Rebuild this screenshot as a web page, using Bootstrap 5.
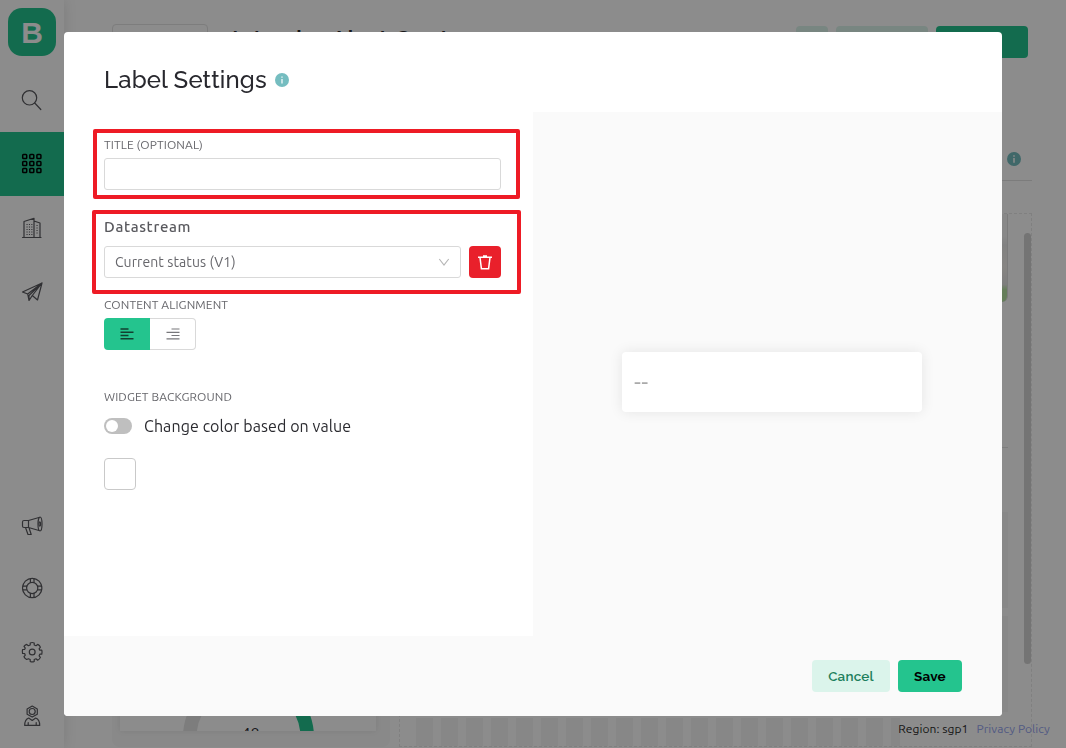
<!DOCTYPE html>
<html lang="en">
<head>
<meta charset="utf-8">
<title>Label Settings</title>
<meta name="viewport" content="width=device-width, initial-scale=1">
<link href="https://cdn.jsdelivr.net/npm/bootstrap@5.3.0/dist/css/bootstrap.min.css" rel="stylesheet">
<style>
:root{--green:#24c48e;--ui:Ubuntu,"Noto Sans",sans-serif;--head:Raleway,Lato,sans-serif}
html,body{height:100%}
body{font-family:var(--ui);color:#2b2b30;overflow:hidden;background:#fff}
svg{display:block}
.app{height:748px}
.side{width:64px;box-shadow:1px 0 12px rgba(0,0,0,.1)}
.side-item{height:64px}
.side-item svg{width:24px;height:24px;fill:none;stroke:#58585d;stroke-width:1.2;margin-left:-1px;stroke-linejoin:round;stroke-linecap:round}
.side-item.on{background:var(--green)}
.side-item.on svg{stroke:#000;stroke-width:1.5}
.logo{width:48px;height:48px;margin:8px 8px 12px;background:var(--green);border-radius:14px;color:#fff;font:700 30px/49px "Liberation Sans",sans-serif}
.topbar{height:181px;margin:0 34px 0 48px;border-bottom:1px solid #e2e2e2}
.tag{width:96px;height:24px;margin-top:24px;border:1px solid #e4e4e4;border-radius:4px}
.app-title{font:600 24px/30px var(--head);letter-spacing:.3px;margin:25px 0 0 24px}
.tb{height:32px;margin-top:26px;border-radius:4px;background:#dbf4eb}
.tb.main{background:var(--green)}
.info{background:#75bdc0;border-radius:50%;width:14px;height:14px}
.bd-info{right:45px;top:152px}
.canvas{left:399px;top:213px;width:633px;height:534px;border:1px dashed #eaeaea}
.ghost{right:23px;background:#f7f7f7;width:100px}
.scrollbar-thumb{left:1024px;top:233px;width:7px;height:431px;border-radius:4px;background:#d3d3d3}
.stripes{left:16px;bottom:0;width:484px;height:28px;background:repeating-linear-gradient(90deg,#f6f6f6 0 17px,#fff 17px 25px)}
.device{left:112px;top:400px;width:278px;height:347px;background:#f9f9f9;border-radius:8px}
.device-in{margin:0 14px 0 8px;height:331px;background:#fff;box-shadow:0 0 6px rgba(0,0,0,.08);overflow:hidden}
.region{right:16px;top:720px;font-size:12px;line-height:18px;gap:8px}
.region .r1{color:#2a2a2a;letter-spacing:.06px}
.region .r2{color:#95a4f0;letter-spacing:.08px}
.mask{background:rgba(0,0,0,.45);z-index:20}
.dlg{width:938px;height:684px;max-width:none;margin:32px 0 0 64px}
.dlg .modal-content{height:684px;border:0;border-radius:4px;overflow:hidden;background:#fff}
.dlg .modal-header{height:80px;border:0;padding:16px 40px 0;justify-content:flex-start;gap:8px}
.dlg h4{font:500 24px/32px var(--head);letter-spacing:.16px;color:#28282e;margin:0}
.dlg .modal-footer{height:80px;border:0;background:#fafafa;padding:24px 40px;gap:8px;border-radius:0}
.dlg .modal-footer .btn{margin:0;height:32px;padding:0;font:700 13.5px/31px var(--head);letter-spacing:.2px;border:0;border-radius:4px}
.dlg .modal-footer .cancel{width:78px;background:#dbf4eb;color:#1d7f5c;font-weight:600}
.dlg .modal-footer .save{width:64px;background:var(--green);color:#000}
.pane{width:469px}
.pv{background:#fafafa}
.pv-card{width:300px;height:60px;margin:0 0 -16px 9px;background:#fff;border-radius:4px;box-shadow:0 0 14px rgba(0,0,0,.09);padding-left:12px}
.pv-txt{font-size:24px;line-height:30px;color:#aaa;letter-spacing:.3px;margin-top:-1px}
.hl{border:4px solid #ee1b25;border-radius:2px}
.hl1{margin:17px 0 0 29px;width:427px;height:70px;padding:4px 15px 0 7px}
.hl2{margin:11px 0 0 28px;width:429px;height:84px;padding:4px 16px 0 8px}
.lbl{font-size:12px;line-height:16px;height:16px;color:#66666b;white-space:nowrap;letter-spacing:.1px}
.ds{font-weight:500;font-size:15px;line-height:18px;color:#58585d;letter-spacing:.65px}
.field{height:32px;border:1px solid #d9d9d9;border-radius:3px;background:#fff;font-size:14px;line-height:30px;color:#66666b;padding:0 10px;box-shadow:none;letter-spacing:.1px}
.del{width:32px;height:32px;background:#e9202b;border-radius:4px;padding:0}
.rest{margin-left:40px}
.al{width:46px;height:32px;border-radius:0 4px 4px 0;border:1px solid #d9d9d9;border-left:0;padding:0}
.al.on{background:var(--green);border:0;border-radius:4px 0 0 4px}
.tog{width:28px;height:16px;border-radius:8px;background:#bfbfbf;padding:2px}
.tog i{display:block;width:12px;height:12px;border-radius:50%;background:#fff}
.tog-text{font-size:16px;line-height:24px;color:#2b2b30;margin-left:12px;letter-spacing:.09px}
.sw{width:32px;height:32px;border:1px solid #c9c9c9;border-radius:4px}
</style>
</head>
<body>
<div class="app d-flex position-relative">
  <nav class="side d-flex flex-column flex-shrink-0">
    <div class="logo text-center">B</div>
    <div class="side-item d-flex align-items-center justify-content-center"><svg viewBox="0 0 24 24"><circle cx="9.500" cy="9.800" r="7.2"/><path d="M14.700 15l6.100 6.500"/></svg></div>
    <div class="side-item on d-flex align-items-center justify-content-center"><svg viewBox="0 0 24 24"><g id="dots"><rect x="2.700" y="2.500" width="4" height="4" rx=".8"/><rect x="9.800" y="2.500" width="4" height="4" rx=".8"/><rect x="16.900" y="2.500" width="4" height="4" rx=".8"/></g><use href="#dots" y="7"/><use href="#dots" y="14"/></svg></div>
    <div class="side-item d-flex align-items-center justify-content-center"><svg viewBox="0 0 24 24"><path d="M2.5 21.5h18.500M4 21V5.500l10-3.200V21M14 5l6 2v14"/><path d="M6.500 8.500h6M6.500 11h6M6.500 13.500h6M6.500 16h6M6.500 18.500h6M16.500 9.500h2M16.500 12h2M16.500 14.500h2M16.500 17h2" stroke-dasharray="1.100 1.300" stroke-linecap="butt"/></svg></div>
    <div class="side-item d-flex align-items-center justify-content-center"><svg viewBox="0 0 24 24"><path d="M22 3L2.500 12l5.200 2L22 3l-4.500 17-5.200-4.500M22 3L9 15.500v5l3.300-5L22 3M7.700 14L9 20.500"/></svg></div>
    <div class="side-item mt-auto d-flex align-items-center justify-content-center"><svg viewBox="0 0 24 24"><path d="M4 8.500h4.500v7H4q-1.500 0-1.500-1.500v-4Q2.500 8.500 4 8.500zM8.500 8.500L19 5.500M8.500 15.500L19 18.500M5.500 15.500l2.500 7h3.200L9 15.800"/><ellipse cx="20" cy="12" rx="2" ry="7"/><ellipse cx="19.800" cy="12" rx=".8" ry="2.200"/></svg></div>
    <div class="side-item d-flex align-items-center justify-content-center"><svg viewBox="0 0 24 24"><circle cx="12.200" cy="12" r="9.700"/><circle cx="12.200" cy="12" r="5.600"/><path d="M10.400 2.600v4M14 2.600v4M10.400 17.400v4M14 17.400v4M2.700 10.200h4M2.700 13.800h4M17.700 10.200h4M17.700 13.800h4"/></svg></div>
    <div class="side-item d-flex align-items-center justify-content-center"><svg viewBox="0 0 24 24"><circle cx="12.200" cy="12" r="2.900"/><path transform="translate(-.3)" d="M10.500 5V3q2-1 4 0v2l1.800.7 1.700-1.300q2 .9 2.700 2.700l-1.300 1.700.7 1.400h2q.6 2.500 0 4h-2l-.7 1.700 1.300 1.500q-.7 1.900-2.700 2.800l-1.700-1.400-1.800.7v2q-2 .9-4 0v-2l-1.800-.7L7 19.500q-1.900-.9-2.700-2.800l1.300-1.500-.7-1.700h-2q-.6-2 0-4h2l.7-1.400-1.300-1.700Q5.100 5.300 7 4.400l1.700 1.300z"/></svg></div>
    <div class="side-item d-flex align-items-center justify-content-center"><svg viewBox="0 0 24 24"><g transform="translate(-.3)"><path d="M12.500 2l5.100 2.900v5.300l-5.100 2.900-5.100-2.900V4.900z"/><circle cx="12.500" cy="7.500" r="3"/><path d="M9 14l3.500 2.500L16 14q4 1.500 4 7.400H5Q5 15.500 9 14zM8.500 18.500v2.700M16.500 18.500v2.700"/></g></svg></div>
  </nav>
  <main class="flex-grow-1">
    <div class="topbar d-flex">
      <div class="tag"></div>
      <div class="app-title">Intruder Alert Center</div>
      <div class="d-flex gap-2 ms-auto" style="margin-right:4px">
        <div class="tb" style="width:32px"></div><div class="tb" style="width:92px"></div><div class="tb main" style="width:92px"></div>
      </div>
    </div>
    <svg class="position-absolute bd-info info" viewBox="0 0 14 14"><path d="M7 3.300v1.500M7 6v4.700" stroke="#fff" stroke-width="1.500"/></svg>
    <div class="position-absolute canvas">
      <div class="position-absolute ghost" style="top:0;height:88px;border-right:1px solid #e0e0e0;border-bottom-right-radius:6px;background:linear-gradient(#f8f8f8 0 25%,#ececec 35%,#f5f2ee 60%,#e5e5e5 80%,#b9e6a4 86%)"></div>
      <div class="position-absolute ghost" style="top:233px;height:1px;background:#e5e5e5"></div>
      <div class="position-absolute ghost" style="top:298px;height:96px"></div>
      <div class="position-absolute ghost" style="top:402px;height:96px"></div>
      <div class="position-absolute stripes"></div>
    </div>
    <div class="position-absolute scrollbar-thumb"></div>
    <div class="position-absolute device"><div class="device-in">
      <svg width="256" height="331" viewBox="120 400 256 331"><path d="M189.700 738a58.800 58.800 0 0 1 58.800-58.800" fill="none" stroke="#e3e3e3" stroke-width="13.500"/><path d="M248.500 679.200a58.800 58.800 0 0 1 58.800 58.800" fill="none" stroke="#24c48e" stroke-width="13.500"/><text x="250.500" y="740" font-size="16" text-anchor="middle" fill="#2b2b30">48</text></svg>
    </div></div>
    <div class="position-absolute region d-flex"><span class="r1">Region: sgp1</span><span class="r2">Privacy Policy</span></div>
  </main>
</div>
<div class="mask position-fixed top-0 start-0 w-100 h-100">
  <div class="modal-dialog dlg">
    <div class="modal-content">
      <div class="modal-header d-flex align-items-center">
        <h4>Label Settings</h4>
        <svg class="info" viewBox="0 0 14 14"><path d="M7 3.500v1.300M7 6v4.500" stroke="#fff" stroke-width="1.200"/></svg>
      </div>
      <div class="modal-body p-0 d-flex">
        <div class="pane">
          <div class="hl hl1">
            <div class="lbl">TITLE (OPTIONAL)</div>
            <input class="form-control field" style="margin-top:5px" type="text">
          </div>
          <div class="hl hl2">
            <div class="ds">Datastream</div>
            <div class="d-flex gap-2" style="margin-top:10px">
              <div class="field flex-grow-1 d-flex align-items-center justify-content-between">Current status (V1)
                <svg width="12" height="12" viewBox="0 0 12 12" fill="none" stroke="#b5b5b5" stroke-width="1.100"><path d="M1.300 3l4.700 6.200L10.700 3"/></svg>
              </div>
              <button class="btn del border-0 d-flex align-items-center justify-content-center"><svg width="16" height="18" viewBox="0 0 16 18" fill="none" stroke="#fff" stroke-width="1.500"><path d="M1 4.200h14M3 4.500l1.400 11.200h7.200L13 4.500M6 3h4"/></svg></button>
            </div>
          </div>
          <div class="rest">
            <div class="lbl" style="padding-top:3px;height:24px">CONTENT ALIGNMENT</div>
            <div class="d-flex">
              <button class="al on d-flex align-items-center justify-content-center"><svg width="14" height="12" viewBox="0 0 14 12" stroke="#123f30" stroke-width="1.500"><path d="M.500 1h8M.500 4.300h13M.500 7.500h8M.500 10.800h13"/></svg></button>
              <button class="al bg-white d-flex align-items-center justify-content-center"><svg width="14" height="12" viewBox="0 0 14 12" stroke="#77777b" stroke-width="1.200"><path d="M5.500 1h8M.500 4.300h13M5.500 7.500h8M.500 10.800h13"/></svg></button>
            </div>
            <div class="lbl" style="margin-top:39px">WIDGET BACKGROUND</div>
            <div class="d-flex align-items-center" style="margin-top:9px"><div class="tog"><i></i></div><span class="tog-text">Change color based on value</span></div>
            <div class="sw" style="margin-top:20px"></div>
          </div>
        </div>
        <div class="pane pv d-flex align-items-center justify-content-center">
          <div class="pv-card d-flex align-items-center"><span class="pv-txt">--</span></div>
        </div>
      </div>
      <div class="modal-footer d-flex flex-nowrap">
        <button class="btn cancel">Cancel</button><button class="btn save">Save</button>
      </div>
    </div>
  </div>
</div>
<script src="https://cdn.jsdelivr.net/npm/bootstrap@5.3.0/dist/js/bootstrap.bundle.min.js"></script>
</body>
</html>
